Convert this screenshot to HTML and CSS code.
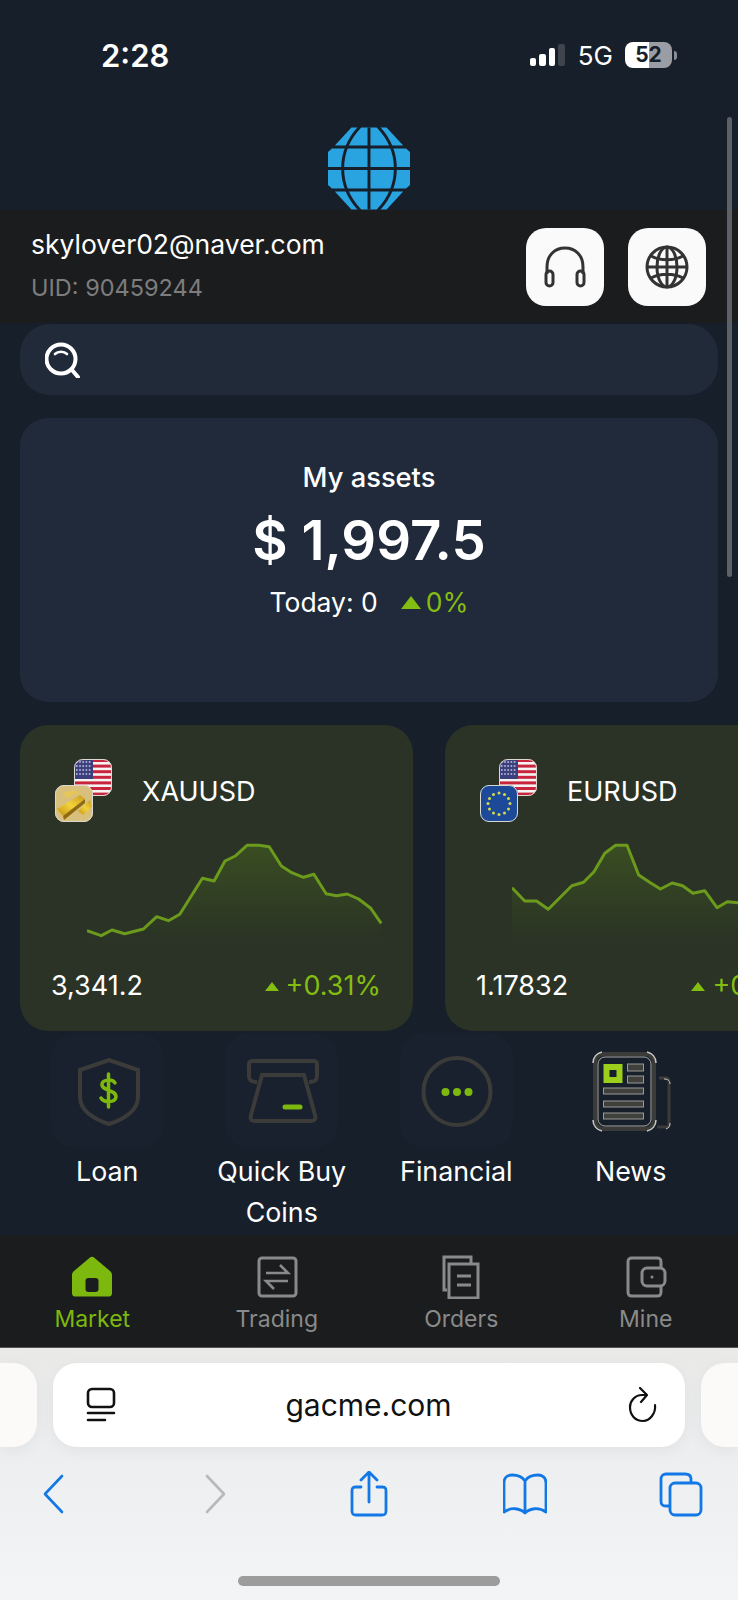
FILE: index.html
```html
<!DOCTYPE html>
<html>
<head>
	<title>gacme.com</title>
	<link rel="stylesheet" href="styles.css">
</head>
<body>
	<svg class="defs" width="0" height="0">
		<defs>
			<symbol id="flag-us" viewBox="0 0 38 37">
				<rect width="38" height="37" fill="#f4f4f4"/>
				<rect y="0" width="38" height="3" fill="#c8243c"/>
				<rect y="5.6" width="38" height="3" fill="#c8243c"/>
				<rect y="11.2" width="38" height="3" fill="#c8243c"/>
				<rect y="16.8" width="38" height="3" fill="#c8243c"/>
				<rect y="22.4" width="38" height="3" fill="#c8243c"/>
				<rect y="28" width="38" height="3" fill="#c8243c"/>
				<rect y="33.6" width="38" height="3.4" fill="#c8243c"/>
				<rect width="19" height="20" fill="#3b3f7e"/>
				<path d="M2 3h15M2 7h15M2 11h15M2 15h15" stroke="#c9cbe4" stroke-width="1.6" stroke-dasharray="1.6 1.6"/>
			</symbol>
		</defs>
	</svg>

	<div class="app">
		<div class="status">
			<span class="time">2:28</span>
			<div class="signal"><i class="b1"></i><i class="b2"></i><i class="b3"></i><i class="b4"></i></div>
			<span class="net">5G</span>
			<span class="battery">52</span>
			<span class="nub"></span>
		</div>

		<div class="logo">
			<svg width="82" height="83" viewBox="0 0 84 84">
				<g fill="#29a4e0">
					<path d="M24 0H60L77 18.500H7Z"/>
					<path d="M4 21.500H80L84 25V59L80 62.500H4L0 59V25Z"/>
					<path d="M7 65.500H77L60 84H24Z"/>
				</g>
				<g fill="none" stroke="#171f2b" stroke-width="3">
					<path d="M0 42H84M42 0V84"/>
					<path d="M33 -1C9 24 9 60 33 85M51 -1C75 24 75 60 51 85"/>
				</g>
			</svg>
		</div>

		<div class="user">
			<div class="user-text">
				<div class="email">skylover02@naver.com</div>
				<div class="uid">UID: 90459244</div>
			</div>
			<div class="user-btn btn-first">
				<svg width="46" height="42" viewBox="0 0 46 42" fill="none" stroke="#333" stroke-width="3">
					<path d="M5 28V21C5 9 13 2 23 2S41 9 41 21V28"/>
					<rect x="4" y="25" width="7" height="15" rx="3.5"/>
					<rect x="35" y="25" width="7" height="15" rx="3.5"/>
				</svg>
			</div>
			<div class="user-btn">
				<svg width="44" height="44" viewBox="0 0 44 44" fill="none" stroke="#333" stroke-width="3">
					<circle cx="22" cy="22" r="20"/>
					<ellipse cx="22" cy="22" rx="10" ry="20"/>
					<path d="M2 22H42M22 2V42M6 11C15 16 29 16 38 11M6 33C15 28 29 28 38 33"/>
				</svg>
			</div>
		</div>

		<div class="search">
			<svg width="36" height="36" viewBox="0 0 36 36" fill="none" stroke="#fff" stroke-linecap="round">
				<circle cx="16" cy="17" r="14.500" stroke-width="4"/>
				<path d="M10 12C13 9 19 9 22 12" stroke-width="2.6"/>
				<path d="M27 28L33 35" stroke-width="4"/>
			</svg>
		</div>

		<div class="assets">
			<div class="assets-title">My assets</div>
			<div class="assets-total">$ 1,997.5</div>
			<div class="assets-today">
				<span>Today: 0</span>
				<span class="up-big"></span>
				<span class="green">0%</span>
			</div>
		</div>

		<div class="pairs">
			<div class="pair">
				<div class="pair-head">
					<div class="flags">
						<svg class="flag flag-back"><use href="#flag-us"/></svg>
						<svg class="flag flag-front" viewBox="0 0 38 37">
							<defs>
								<linearGradient id="bar" x1="0" y1="1" x2="1" y2="0">
									<stop offset="0" stop-color="#c4920f"/>
									<stop offset="0.5" stop-color="#f3d23c"/>
									<stop offset="1" stop-color="#c99b1c"/>
								</linearGradient>
							</defs>
							<rect width="38" height="37" fill="#d8c07c"/>
							<path d="M2 24L25 10L30 14L8 31Z" fill="url(#bar)"/>
							<path d="M8 31L30 14V18L9 35Z" fill="#8f6a10"/>
							<path d="M8 8L20 5L24 8L11 13Z" fill="#e6c65a"/>
							<path d="M23 26L35 15L37 22L28 30Z" fill="url(#bar)"/>
						</svg>
					</div>
					<span class="pair-name">XAUUSD</span>
				</div>
				<svg class="chart" width="296" height="120" viewBox="0 0 296 120">
					<defs>
						<linearGradient id="area" x1="0" y1="0" x2="0" y2="1">
							<stop offset="0" stop-color="#5c8a1a" stop-opacity="0.3"/>
							<stop offset="1" stop-color="#5c8a1a" stop-opacity="0"/>
						</linearGradient>
					</defs>
					<path fill="url(#area)" d="M0 90.7L14.2 95.7L25 90L37.7 93.7L56.5 89L69.7 76.7L81.5 80.7L92.8 74.3L115.4 38.3L127.1 41L138 21L148.3 16L160 5.3L171.8 5.3L182.2 6.7L194.4 26L204.8 32.7L216.5 37.3L226.9 34.3L239.1 53.7L249.5 55.7L260.3 54L271.6 59L283.8 68.3L294.2 83.3V100H0Z"/>
					<path fill="none" stroke="#6b9a1c" stroke-width="3" stroke-linejoin="round" d="M0 90.7L14.2 95.7L25 90L37.7 93.7L56.5 89L69.7 76.7L81.5 80.7L92.8 74.3L115.4 38.3L127.1 41L138 21L148.3 16L160 5.3L171.8 5.3L182.2 6.7L194.4 26L204.8 32.7L216.5 37.3L226.9 34.3L239.1 53.7L249.5 55.7L260.3 54L271.6 59L283.8 68.3L294.2 83.3"/>
				</svg>
				<div class="pair-foot">
					<span>3,341.2</span>
					<span class="change"><i class="up-small"></i>+0.31%</span>
				</div>
			</div>

			<div class="pair">
				<div class="pair-head">
					<div class="flags">
						<svg class="flag flag-back"><use href="#flag-us"/></svg>
						<svg class="flag flag-front" viewBox="0 0 38 37">
							<rect width="38" height="37" fill="#1c4a98"/>
							<g fill="#d7d94a">
								<circle cx="19" cy="8" r="1.5"/><circle cx="24.5" cy="9.5" r="1.5"/><circle cx="28.5" cy="13.5" r="1.5"/>
								<circle cx="30" cy="18.5" r="1.5"/><circle cx="28.5" cy="24" r="1.5"/><circle cx="24.5" cy="28" r="1.5"/>
								<circle cx="19" cy="29.5" r="1.5"/><circle cx="13.5" cy="28" r="1.5"/><circle cx="9.5" cy="24" r="1.5"/>
								<circle cx="8" cy="18.5" r="1.5"/><circle cx="9.5" cy="13.5" r="1.5"/><circle cx="13.5" cy="9.5" r="1.5"/>
							</g>
						</svg>
					</div>
					<span class="pair-name">EURUSD</span>
				</div>
				<svg class="chart" width="296" height="120" viewBox="0 0 296 120">
					<path fill="url(#area)" d="M0 47.7L12.7 61L24.5 61L36.3 69.3L59.8 45.7L71.6 42.3L82 31.7L92.8 13.3L103.6 5.3L115 5.3L126.7 35L137.6 42.3L148.4 49L160.2 43L170.6 45.7L181 53.3L192.7 50.7L205 67.7L215.3 61.7L226 62.7L240 70L260 66L280 75L294 85V100H0Z"/>
					<path fill="none" stroke="#6b9a1c" stroke-width="3" stroke-linejoin="round" d="M0 47.7L12.7 61L24.5 61L36.3 69.3L59.8 45.7L71.6 42.3L82 31.7L92.8 13.3L103.6 5.3L115 5.3L126.7 35L137.6 42.3L148.4 49L160.2 43L170.6 45.7L181 53.3L192.7 50.7L205 67.7L215.3 61.7L226 62.7L240 70L260 66L280 75L294 85"/>
				</svg>
				<div class="pair-foot">
					<span>1.17832</span>
					<span class="change"><i class="up-small"></i>+0.12%</span>
				</div>
			</div>
		</div>

		<div class="menu">
			<div class="menu-item">
				<div class="tile">
					<svg width="113" height="115" viewBox="0 0 113 115" fill="none" stroke="#3b3b39" stroke-width="4">
						<path d="M58 27L87 37V64C87 77 74 86 58 91C42 86 29 77 29 64V37Z"/>
						<path d="M64 50C62 46 52 46 51 51C50 58 65 56 65 64C64 70 53 70 50 65M57.500 41V74" stroke="#7db80e" stroke-width="3.5" stroke-linecap="round"/>
					</svg>
				</div>
				<div class="menu-label">Loan</div>
			</div>
			<div class="menu-item">
				<div class="tile">
					<svg width="113" height="115" viewBox="0 0 113 115" fill="none" stroke="#3b3b39" stroke-width="4">
						<path d="M32 49C26 49 24 47 24 43V31C24 28 26 28 28 28H88C91 28 92 29 92 31V43C92 47 90 49 84 49"/>
						<path d="M37 42H79L90 82C91 86 90 88 86 88H30C26 88 25 86 26 82Z"/>
						<path d="M60 74H75" stroke="#7db80e" stroke-width="5" stroke-linecap="round"/>
					</svg>
				</div>
				<div class="menu-label">Quick Buy Coins</div>
			</div>
			<div class="menu-item">
				<div class="tile">
					<svg width="113" height="115" viewBox="0 0 113 115" fill="none" stroke="#3b3b39" stroke-width="4">
						<circle cx="57" cy="58.5" r="33.5"/>
						<g fill="#7db80e" stroke="none">
							<circle cx="45.5" cy="59" r="4"/><circle cx="57" cy="59" r="4"/><circle cx="68.500" cy="59" r="4"/>
						</g>
					</svg>
				</div>
				<div class="menu-label">Financial</div>
			</div>
			<div class="menu-item">
				<div class="tile tile-plain">
					<svg width="113" height="115" viewBox="0 0 113 115" fill="none" stroke="#3b3b39" stroke-width="4">
						<rect x="21" y="21" width="59" height="75" rx="9"/>
						<rect x="24" y="24" width="53" height="69" rx="7" stroke="#a9a9a4" stroke-width="1"/>
						<path d="M19 30C19 24 23 20 28 19M73 19C78 20 82 24 82 30M19 87C19 93 23 97 28 98M73 98C78 97 82 93 82 87" stroke="#c9c9c4" stroke-width="1.5"/>
						<path d="M85 45H92C94 45 95 47 95 49V92C95 94 93 94 92 94H83" stroke-width="3"/>
						<path d="M90 46C93 46 96 47 96 51M96 90C96 93 95 95 92 96" stroke="#c9c9c4" stroke-width="1"/>
						<rect x="29.500" y="31" width="19" height="19" fill="#9ccf1c" stroke="none"/>
						<rect x="35.500" y="37" width="7" height="7" fill="#171f2b" stroke="none"/>
						<g fill="#3f3f3c" stroke="#9a9a96" stroke-width="1">
							<rect x="53.500" y="31" width="16" height="7"/>
							<rect x="53.500" y="43" width="16" height="7"/>
							<rect x="29.500" y="55" width="40" height="6"/>
							<rect x="29.500" y="68" width="40" height="6"/>
							<rect x="29.500" y="80" width="40" height="6"/>
						</g>
					</svg>
				</div>
				<div class="menu-label">News</div>
			</div>
		</div>

		<div class="nav">
			<div class="nav-item active">
				<svg width="44" height="42" viewBox="0 0 44 42">
					<path d="M20 1.500C21 0.500 23 0.500 24 1.500L40 15C41.500 16.500 42 17.500 42 19V37C42 40 40 40.500 38 40.500H6C4 40.500 2 40 2 37V19C2 17.500 2.500 16.500 4 15Z" fill="#7db80e"/>
					<rect x="15.500" y="22" width="13" height="14" rx="3" fill="#1b1c1e"/>
				</svg>
				<span>Market</span>
			</div>
			<div class="nav-item">
				<svg width="44" height="42" viewBox="0 0 44 42" fill="none" stroke="#8a8a8a" stroke-width="3">
					<rect x="4" y="2" width="37" height="38" rx="3"/>
					<path d="M11 17H33L25 9M33 25H11L19 33" stroke-width="2.6"/>
				</svg>
				<span>Trading</span>
			</div>
			<div class="nav-item">
				<svg width="44" height="44" viewBox="0 0 44 44" fill="none" stroke="#8a8a8a" stroke-width="3">
					<path d="M8 35H5V2H32V8"/>
					<rect x="10" y="9" width="29" height="34"/>
					<path d="M18 21H32M18 30H32"/>
				</svg>
				<span>Orders</span>
			</div>
			<div class="nav-item">
				<svg width="44" height="42" viewBox="0 0 44 42" fill="none" stroke="#8a8a8a" stroke-width="3">
					<path d="M37 12V6C37 3 36 2 33 2H8C5 2 4 3 4 6V36C4 39 5 40 8 40H33C36 40 37 39 37 36V30"/>
					<rect x="18" y="12" width="23" height="18" rx="5"/>
					<circle cx="28" cy="21" r="1.5" fill="#8a8a8a" stroke="none"/>
				</svg>
				<span>Mine</span>
			</div>
		</div>

		<div class="scrollbar"></div>
	</div>

	<div class="browser">
		<div class="url-row">
			<div class="tab-edge tab-left"></div>
			<div class="url-bar">
				<svg width="30" height="36" viewBox="0 0 30 36" fill="none" stroke="#111" stroke-width="2.6" stroke-linecap="round">
					<rect x="2" y="2" width="26" height="18" rx="4"/>
					<path d="M2 26H28M2 33H19"/>
				</svg>
				<span class="url-text">gacme.com</span>
				<svg width="32" height="36" viewBox="0 0 32 36" fill="none" stroke="#111" stroke-width="2.2" stroke-linecap="round" stroke-linejoin="round">
					<path d="M28 18C29 26 23 34 16 34C8 34 3 28 3 20C3 14 8 8 15 8H19"/>
					<path d="M13 1L20 8L14 15"/>
				</svg>
			</div>
			<div class="tab-edge tab-right"></div>
		</div>
		<div class="tools">
			<svg class="tool t-back" width="44" height="46" viewBox="0 0 44 46" fill="none" stroke="#1278e6" stroke-width="2.6" stroke-linecap="round" stroke-linejoin="round">
				<path d="M30 5L13 23L30 41"/>
			</svg>
			<svg class="tool t-next" width="44" height="46" viewBox="0 0 44 46" fill="none" stroke="#b8b9bb" stroke-width="2.6" stroke-linecap="round" stroke-linejoin="round">
				<path d="M14 5L31 23L14 41"/>
			</svg>
			<svg class="tool t-share" width="44" height="46" viewBox="0 0 44 46" fill="none" stroke="#1278e6" stroke-width="2.8" stroke-linecap="round" stroke-linejoin="round">
				<path d="M14 16H9C6 16 5 17 5 20V40C5 43 6 44 9 44H35C38 44 39 43 39 40V20C39 17 38 16 35 16H30"/>
				<path d="M22 31V2M14 9L22 1L30 9"/>
			</svg>
			<svg class="tool t-book" width="44" height="46" viewBox="0 0 44 46" fill="none" stroke="#1278e6" stroke-width="2.8" stroke-linecap="round" stroke-linejoin="round">
				<path d="M22 10C19 5 14 4 9 4C5 4 1 6 1 12V41C8 36 17 37 22 42C27 37 36 36 43 41V12C43 6 39 4 35 4C30 4 25 5 22 10ZM22 10V42"/>
			</svg>
			<svg class="tool t-tabs" width="44" height="46" viewBox="0 0 44 46" fill="none" stroke="#1278e6" stroke-width="2.8">
				<path d="M11 35H7C3 35 2 33 2 30V8C2 5 4 3 7 3H26C30 3 32 5 32 8V12"/>
				<rect x="11" y="12" width="31" height="32" rx="5"/>
			</svg>
		</div>
		<div class="home-bar"></div>
	</div>
</body>
</html>
```

FILE: styles.css
```css
* {
	box-sizing: border-box;
}
html, body {
	margin: 0;
	height: 1600px;
	overflow: hidden;
}
body {
	font-family: Inter, "Liberation Sans", sans-serif;
	background: #171f2b;
	color: #fff;
}
.defs {
	position: absolute;
}
.app {
	position: relative;
	height: 1348px;
	display: flex;
	flex-direction: column;
	background: #171f2b;
	overflow: hidden;
}

/* status bar */
.status {
	height: 110px;
	display: flex;
	align-items: center;
	padding: 0 61px 0 101px;
	flex-shrink: 0;
}
.time {
	font-size: 31px;
	font-weight: 600;
	margin-right: auto;
}
.signal {
	display: flex;
	align-items: flex-end;
	gap: 3px;
	height: 22px;
}
.signal i {
	width: 6.500px;
	border-radius: 2px;
	background: #fff;
}
.signal .b1 { height: 8px; }
.signal .b2 { height: 12px; }
.signal .b3 { height: 18px; }
.signal .b4 { height: 22px; background: #3f444d; }
.net {
	font-size: 26px;
	margin-left: 13px;
}
.battery {
	width: 47px;
	height: 26px;
	margin-left: 12px;
	border-radius: 8px;
	background: linear-gradient(90deg, #fff 0 52%, #9a9da3 52%);
	color: #171f2b;
	font-size: 21px;
	font-weight: 700;
	line-height: 26px;
	text-align: center;
}
.nub {
	width: 3px;
	height: 9px;
	margin-left: 2px;
	border-radius: 0 3px 3px 0;
	background: #8b8e94;
}

.logo {
	height: 100px;
	display: flex;
	justify-content: center;
	align-items: flex-end;
	flex-shrink: 0;
}

/* user band */
.user {
	height: 113px;
	flex-shrink: 0;
	display: flex;
	align-items: center;
	padding: 0 32px 0 31px;
	background: #1b1c1e;
}
.user-text {
	flex: 1;
	padding-bottom: 3px;
}
.email {
	font-size: 26.5px;
	line-height: 32px;
	margin-bottom: 13px;
}
.uid {
	font-size: 23.5px;
	line-height: 30px;
	color: #7d7d7d;
}
.user-btn {
	width: 78px;
	height: 78px;
	margin-top: 1px;
	border-radius: 20px;
	background: #fafafa;
	display: flex;
	align-items: center;
	justify-content: center;
}
.btn-first {
	margin-right: 24px;
}

.search {
	height: 71px;
	flex-shrink: 0;
	margin: 1px 20px 0;
	padding-left: 25px;
	border-radius: 30px;
	background: #202a38;
	display: flex;
	align-items: center;
}

/* assets card */
.assets {
	height: 284px;
	flex-shrink: 0;
	margin: 23px 20px 0;
	padding-top: 44px;
	border-radius: 28px;
	background: #202a3a;
	text-align: center;
}
.assets-title {
	font-size: 27.3px;
	font-weight: 500;
	line-height: 32px;
}
.assets-total {
	font-size: 54.5px;
	font-weight: 600;
	line-height: 64px;
	margin-top: 14px;
}
.assets-today {
	display: flex;
	justify-content: center;
	align-items: center;
	font-size: 26.5px;
	line-height: 32px;
	margin-top: 14px;
}
.green {
	color: #84bd12;
}
.up-big {
	width: 0;
	height: 0;
	margin: 0 5px 0 23px;
	border-left: 10px solid transparent;
	border-right: 10px solid transparent;
	border-bottom: 13px solid #84bd12;
}

/* pair cards */
.pairs {
	display: flex;
	gap: 32px;
	height: 306px;
	flex-shrink: 0;
	margin: 23px 0 0 20px;
}
.pair {
	width: 393px;
	flex-shrink: 0;
	padding: 34px 32px 0 31px;
	border-radius: 28px;
	background: #2a3325;
}
.pair-head {
	display: flex;
	align-items: center;
	height: 63px;
}
.flags {
	position: relative;
	width: 57px;
	height: 63px;
	margin-left: 4px;
	margin-right: 30px;
}
.flag {
	position: absolute;
	width: 38px;
	height: 37px;
	border-radius: 9px;
	outline: 1px solid #d9d9d2;
	outline-offset: -1px;
}
.flag-back {
	left: 19px;
	top: 0;
}
.flag-front {
	left: 0;
	top: 26px;
}
.pair-name {
	font-size: 27px;
	padding-top: 2px;
}
.chart {
	display: block;
	margin: 18px 0 0 36px;
}
.pair-foot {
	display: flex;
	justify-content: space-between;
	align-items: center;
	font-size: 27px;
	line-height: 32px;
	margin-top: 10px;
}
.change {
	display: flex;
	align-items: center;
	color: #84bd12;
}
.up-small {
	width: 0;
	height: 0;
	margin-right: 7px;
	border-left: 7px solid transparent;
	border-right: 7px solid transparent;
	border-bottom: 9px solid #84bd12;
}

/* shortcuts */
.menu {
	display: grid;
	grid-template-columns: repeat(4, 174.5px);
	margin: 2px 0 0 20px;
	flex-shrink: 0;
	height: 202px;
}
.menu-item {
	display: flex;
	flex-direction: column;
	align-items: center;
}
.tile {
	width: 113px;
	height: 115px;
	border-radius: 24px;
	background: #19212e;
}
.tile-plain {
	background: none;
}
.tile svg {
	display: block;
}
.menu-label {
	width: 150px;
	font-size: 26.8px;
	line-height: 41px;
	text-align: center;
	margin-top: 3px;
}

/* bottom tabs */
.nav {
	height: 113px;
	flex-shrink: 0;
	display: grid;
	grid-template-columns: repeat(4, 184.5px);
	background: #1b1c1e;
	border-bottom: 1px solid #555;
}
.nav-item {
	display: flex;
	flex-direction: column;
	align-items: center;
	padding-top: 20px;
	font-size: 23px;
	line-height: 32px;
	color: #8a8a8a;
}
.nav-item svg {
	height: 44px;
	margin-bottom: 4px;
}
.nav-item.active {
	color: #7db80e;
}
.scrollbar {
	position: absolute;
	left: 727px;
	top: 117px;
	width: 5px;
	height: 460px;
	border-radius: 3px;
	background: #5d6167;
}

/* safari chrome */
.browser {
	height: 252px;
	background: linear-gradient(180deg, #e9e9e7 0, #eceef0 40%, #f3f4f6 100%);
	padding-top: 15px;
}
.url-row {
	display: flex;
	gap: 16px;
	height: 84px;
}
.tab-edge {
	width: 37px;
	background: #fbfaf8;
	box-shadow: 0 4px 16px rgba(0, 0, 0, 0.05);
}
.tab-left {
	border-radius: 0 24px 24px 0;
}
.tab-right {
	border-radius: 24px 0 0 24px;
}
.url-bar {
	flex: 1;
	display: flex;
	align-items: center;
	justify-content: space-between;
	padding: 0 26px 0 33px;
	border-radius: 24px;
	background: #fff;
	box-shadow: 0 4px 16px rgba(0, 0, 0, 0.05);
	color: #111;
}
.url-text {
	font-size: 30px;
	margin-left: -3px;
	padding-right: 3px;
}
.tools {
	display: flex;
	margin-top: 24px;
}
.tool {
	flex-shrink: 0;
}
.t-back { margin-left: 32px; }
.t-next { margin-left: 117px; }
.t-share { margin-left: 110px; }
.t-book { margin-left: 112px; }
.t-tabs { margin-left: 112px; }
.home-bar {
	width: 262px;
	height: 10px;
	margin: 59px auto 0;
	border-radius: 5px;
	background: #9c9c9c;
}
```
